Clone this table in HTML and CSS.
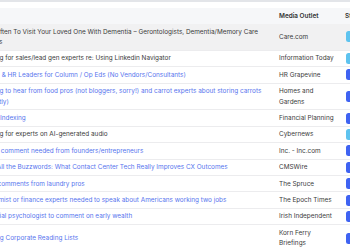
FILE: index.html
```html
<!DOCTYPE html>
<html lang="en">
<head>
    <meta charset="UTF-8">
    <meta name="viewport" content="width=device-width, initial-scale=1.0">
    <title>Media Requests</title>
    <link rel="stylesheet" href="styles.css">
</head>
<body>
    <div class="panel">
        <!-- Requests table -->
        <table class="requests">
            <colgroup>
                <col class="col-title">
                <col class="col-outlet">
                <col class="col-status">
            </colgroup>
            <thead>
                <tr>
                    <th>Title</th>
                    <th>Media Outlet</th>
                    <th class="status">Status</th>
                </tr>
            </thead>
            <tbody>
                <tr class="hover">
                    <td class="title">How Often To Visit Your Loved One With Dementia – Gerontologists, Dementia/Memory Care Experts</td>
                    <td>Care.com</td>
                    <td class="status"><span class="badge light">Closed</span></td>
                </tr>
                <tr>
                    <td class="title">Looking for sales/lead gen experts re: Using Linkedin Navigator</td>
                    <td>Information Today</td>
                    <td class="status"><span class="badge light">Closed</span></td>
                </tr>
                <tr>
                    <td class="title link">Payroll &amp; HR Leaders for Column / Op Eds (No Vendors/Consultants)</td>
                    <td>HR Grapevine</td>
                    <td class="status"><span class="badge">Open</span></td>
                </tr>
                <tr>
                    <td class="title link">Looking to hear from food pros (not bloggers, sorry!) and carrot experts about storing carrots correctly)</td>
                    <td>Homes and Gardens</td>
                    <td class="status"><span class="badge">Open</span></td>
                </tr>
                <tr>
                    <td class="title link">Faster Indexing</td>
                    <td>Financial Planning</td>
                    <td class="status"><span class="badge">Open</span></td>
                </tr>
                <tr>
                    <td class="title">Looking for experts on AI-generated audio</td>
                    <td>Cybernews</td>
                    <td class="status"><span class="badge light">Closed</span></td>
                </tr>
                <tr>
                    <td class="title link">Expert comment needed from founders/entrepreneurs</td>
                    <td>Inc. - Inc.com</td>
                    <td class="status"><span class="badge">Open</span></td>
                </tr>
                <tr>
                    <td class="title link">Amid All the Buzzwords: What Contact Center Tech Really Improves CX Outcomes</td>
                    <td>CMSWire</td>
                    <td class="status"><span class="badge">Open</span></td>
                </tr>
                <tr>
                    <td class="title link">Need comments from laundry pros</td>
                    <td>The Spruce</td>
                    <td class="status"><span class="badge">Open</span></td>
                </tr>
                <tr>
                    <td class="title link">Economist or finance experts needed to speak about Americans working two jobs</td>
                    <td>The Epoch Times</td>
                    <td class="status"><span class="badge">Open</span></td>
                </tr>
                <tr>
                    <td class="title link">Financial psychologist to comment on early wealth</td>
                    <td>Irish Independent</td>
                    <td class="status"><span class="badge">Open</span></td>
                </tr>
                <tr>
                    <td class="title link">Ranking Corporate Reading Lists</td>
                    <td>Korn Ferry Briefings</td>
                    <td class="status"><span class="badge">Open</span></td>
                </tr>
            </tbody>
        </table>
    </div>
</body>
</html>
```

FILE: styles.css
```css
/* Page */
body {
    margin: 0;
    font-family: "Inter", "Liberation Sans", sans-serif;
    background: #fff;
    color: #333;
    overflow: hidden;
}

/* Card holding the table, scrolled sideways */
.panel {
    border-top: 2px solid #e3e5e9;
    padding-top: 6px;
    margin-left: -28.5px;
}

/* Table */
.requests {
    table-layout: fixed;
    border-collapse: collapse;
    width: 430px;
    font-size: 6.4px;
    line-height: 10.4px;
}

.col-title { width: 299.5px; }
.col-outlet { width: 68px; }
.col-status { width: 62.5px; }

th, td {
    padding: 2.5px 3px 2.5px 8px;
    text-align: left;
    vertical-align: middle;
}

th {
    background: #f6f7f9;
    font-weight: 600;
    color: #333;
    padding-top: 2.8px;
    padding-bottom: 2.8px;
}

td {
    border-bottom: 1px solid #ececee;
    color: #3b3b3b;
}

.hover td {
    background: #f1f1f2;
}

.title.link {
    color: #5775ee;
}

/* Status badges */
.status {
    padding-left: 6px;
}

td.status {
    padding-top: 0;
    padding-bottom: 0;
}

.badge {
    display: block;
    width: 30px;
    margin-left: 1px;
    padding: 0 6px;
    height: 11px;
    line-height: 11px;
    border-radius: 2.5px;
    background: #3f63f2;
    color: #fff;
    font-weight: 600;
}

.badge.light {
    background: #5ec3ef;
}
```
